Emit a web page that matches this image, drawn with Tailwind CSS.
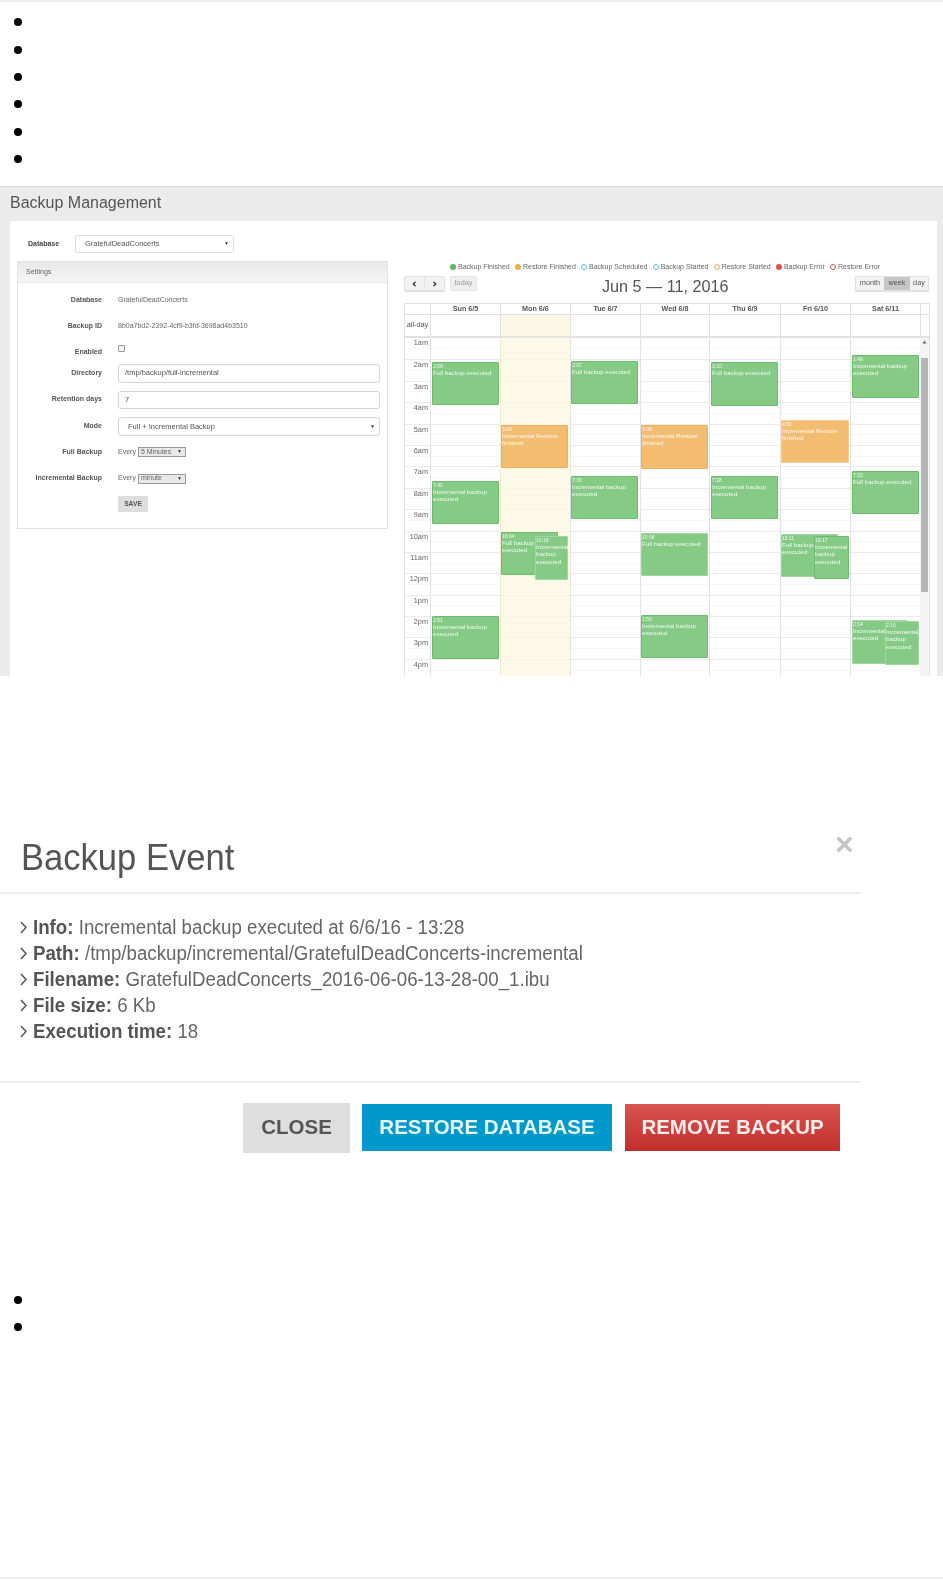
<!DOCTYPE html>
<html lang="en">
<head>
  <meta charset="utf-8" />
  <title>Backup Management</title>
  <script src="https://cdn.jsdelivr.net/npm/@tailwindcss/browser@4"></script>
</head>
<body class="bg-white font-['Liberation_Sans',Arial,sans-serif] text-[#555] h-[1580px] overflow-hidden">

  <div class="h-[2px] bg-[#eee]"></div>

  <!-- top empty list -->
  <ul class="pt-[6.5px] pl-[14px] h-[184px]">
    <li class="h-[27.4px] flex items-center"><span class="w-[8px] h-[8px] rounded-full bg-black"></span></li>
    <li class="h-[27.4px] flex items-center"><span class="w-[8px] h-[8px] rounded-full bg-black"></span></li>
    <li class="h-[27.4px] flex items-center"><span class="w-[8px] h-[8px] rounded-full bg-black"></span></li>
    <li class="h-[27.4px] flex items-center"><span class="w-[8px] h-[8px] rounded-full bg-black"></span></li>
    <li class="h-[27.4px] flex items-center"><span class="w-[8px] h-[8px] rounded-full bg-black"></span></li>
    <li class="h-[27.4px] flex items-center"><span class="w-[8px] h-[8px] rounded-full bg-black"></span></li>
  </ul>

  <!-- Backup Management screenshot -->
  <section class="h-[490px] border-t border-[#d8d8d8] bg-[#ebebeb] overflow-hidden blur-[0.3px]">
    <h1 class="h-[34px] pl-[10px] pt-[6px] text-[16px] leading-[20px] text-[#555]">Backup Management</h1>

    <div class="ml-[10px] mr-[6px] h-[460px] bg-white pl-[7px] flex">

      <!-- left column -->
      <div class="w-[371px] shrink-0">
        <div class="flex items-center h-[40px] pt-[6px]">
          <span class="w-[58px] pl-[11px] text-[7px] font-bold text-[#444]">Database</span>
          <div class="w-[159px] h-[18px] border border-[#ddd] rounded-[3px] flex items-center justify-between pl-[9px] pr-[4px] text-[7.5px] text-[#555]">
            <span>GratefulDeadConcerts</span>
            <span class="text-[5px] text-[#333]">▼</span>
          </div>
        </div>

        <div class="h-[268px] border border-[#e3e3e3] text-[7px]">
          <div class="h-[21px] bg-gradient-to-b from-[#e8e8e8] to-[#f5f5f5] border-b border-[#e8e8e8] pl-[8px] flex items-center text-[#666]">Settings</div>
          <div class="pt-[4px]">
            <div class="flex items-center h-[26px] gap-[16px]">
              <span class="w-[84px] text-right font-bold text-[#555]">Database</span>
              <span class="text-[#666]">GratefulDeadConcerts</span>
            </div>
            <div class="flex items-center h-[26px] gap-[16px]">
              <span class="w-[84px] text-right font-bold text-[#555]">Backup ID</span>
              <span class="text-[#666]">8b0a7bd2-2392-4cf9-b3fd-3698ad4b3510</span>
            </div>
            <div class="flex items-center h-[23px] gap-[16px]">
              <span class="w-[84px] text-right font-bold text-[#555] pt-[4px]">Enabled</span>
              <span class="w-[7px] h-[7px] border border-[#999] rounded-[1px] mb-[5px] bg-[#f4f4f4]"></span>
            </div>
            <div class="flex items-center h-[22px] gap-[16px]">
              <span class="w-[84px] text-right font-bold text-[#555]">Directory</span>
              <div class="w-[262px] h-[19px] border border-[#d4d4d4] rounded-[3px] flex items-center pl-[6px] text-[7.5px] text-[#555]">/tmp/backup/full-incremental</div>
            </div>
            <div class="flex items-center h-[31px] gap-[16px]">
              <span class="w-[84px] text-right font-bold text-[#555]">Retention days</span>
              <div class="w-[262px] h-[18px] border border-[#d4d4d4] rounded-[3px] flex items-center pl-[6px] text-[7.5px] text-[#555]">7</div>
            </div>
            <div class="flex items-center h-[23px] gap-[16px]">
              <span class="w-[84px] text-right font-bold text-[#555]">Mode</span>
              <div class="w-[262px] h-[19px] border border-[#d4d4d4] rounded-[3px] flex items-center justify-between pl-[9px] pr-[4px] text-[7.5px] text-[#555]">
                <span>Full + Incremental Backup</span>
                <span class="text-[5px] text-[#333]">▼</span>
              </div>
            </div>
            <div class="flex items-center h-[28px] gap-[16px]">
              <span class="w-[84px] text-right font-bold text-[#555]">Full Backup</span>
              <div class="flex items-center gap-[2px] text-[#666]">
                <span>Every</span>
                <div class="w-[48px] h-[10px] border border-[#999] bg-[#e8e8e8] flex items-center justify-between pl-[2px] pr-[3px] text-[7px]"><span>5 Minutes</span><span class="text-[5px] text-[#333]">▼</span></div>
              </div>
            </div>
            <div class="flex items-center h-[25px] gap-[16px]">
              <span class="w-[84px] text-right font-bold text-[#555]">Incremental Backup</span>
              <div class="flex items-center gap-[2px] text-[#666]">
                <span>Every</span>
                <div class="w-[48px] h-[10px] border border-[#999] bg-[#e8e8e8] flex items-center justify-between pl-[2px] pr-[3px] text-[7px]"><span>minute</span><span class="text-[5px] text-[#333]">▼</span></div>
              </div>
            </div>
            <div class="pl-[100px] pt-[5px]">
              <div class="w-[30px] h-[16px] bg-[#ddd] flex items-center justify-center font-bold text-[#555] text-[6.7px]">SAVE</div>
            </div>
          </div>
        </div>
      </div>

      <!-- calendar -->
      <div class="ml-[16px] w-[525px] shrink-0">
        <div class="h-[55px] relative">
          <div class="absolute top-[41px] left-[46px] flex items-center text-[7px] leading-[10px] text-[#666] whitespace-nowrap gap-[5.2px]">
            <span class="flex items-center gap-[2px]"><i class="w-[6px] h-[6px] rounded-full bg-[#5cb85c]"></i>Backup Finished</span>
            <span class="flex items-center gap-[2px]"><i class="w-[6px] h-[6px] rounded-full bg-[#f0ad4e]"></i>Restore Finished</span>
            <span class="flex items-center gap-[2px]"><i class="w-[6px] h-[6px] rounded-full border border-[#5bc0de]"></i>Backup Scheduled</span>
            <span class="flex items-center gap-[2px]"><i class="w-[6px] h-[6px] rounded-full border border-[#5bc0de]"></i>Backup Started</span>
            <span class="flex items-center gap-[2px]"><i class="w-[6px] h-[6px] rounded-full border border-[#f0ad4e]"></i>Restore Started</span>
            <span class="flex items-center gap-[2px]"><i class="w-[6px] h-[6px] rounded-full bg-[#d9534f]"></i>Backup Error</span>
            <span class="flex items-center gap-[2px]"><i class="w-[6px] h-[6px] rounded-full border border-[#d9534f]"></i>Restore Error</span>
          </div>
        </div>

        <!-- toolbar -->
        <div class="h-[27px] flex items-start relative">
          <div class="flex h-[15px] w-[41px] rounded-[2px] border border-[#e2e2e2] bg-[#f2f2f2] shadow-[0_1px_1px_#ddd]">
            <span class="w-[20px] flex items-center justify-center border-r border-[#e2e2e2]"><svg width="5" height="6" viewBox="0 0 5 6"><path d="M3.5 .8 1.3 3l2.2 2.2" fill="none" stroke="#333" stroke-width="1.3"/></svg></span>
            <span class="flex-1 flex items-center justify-center"><svg width="5" height="6" viewBox="0 0 5 6"><path d="M1.5 .8 3.7 3 1.5 5.2" fill="none" stroke="#333" stroke-width="1.3"/></svg></span>
          </div>
          <div class="ml-[5px] w-[27px] h-[15px] rounded-[2px] border border-[#e5e5e5] bg-[#efefef] flex items-center justify-center text-[7.3px] text-[#999]">today</div>
          <div class="absolute left-[198px] top-[1px] text-[16.2px] leading-[18px] text-[#555] whitespace-nowrap">Jun 5 — 11, 2016</div>
          <div class="ml-auto flex h-[15px] w-[74px] rounded-[2px] border border-[#e2e2e2] bg-[#f2f2f2] text-[7.3px] text-[#555] shadow-[0_1px_1px_#ddd]">
            <span class="w-[28px] flex items-center justify-center">month</span>
            <span class="w-[26px] flex items-center justify-center bg-[#c6c6c6]">week</span>
            <span class="flex-1 flex items-center justify-center">day</span>
          </div>
        </div>

        <!-- day header -->
        <div class="grid grid-cols-[25px_70px_70px_70px_69px_71px_70px_70px_10px] h-[11px] border-t border-[#e2e2e2] border-x text-[7.2px] font-bold text-[#555] text-center leading-[10px] -mr-px">
          <div></div>
          <div class="border-l border-[#e2e2e2]">Sun 6/5</div>
          <div class="border-l border-[#e2e2e2]">Mon 6/6</div>
          <div class="border-l border-[#e2e2e2]">Tue 6/7</div>
          <div class="border-l border-[#e2e2e2]">Wed 6/8</div>
          <div class="border-l border-[#e2e2e2]">Thu 6/9</div>
          <div class="border-l border-[#e2e2e2]">Fri 6/10</div>
          <div class="border-l border-[#e2e2e2]">Sat 6/11</div>
          <div class="border-l border-[#e2e2e2]"></div>
        </div>
        <!-- all-day -->
        <div class="grid grid-cols-[25px_70px_70px_70px_69px_71px_70px_70px_10px] h-[24px] border-t border-b-[2px] border-x border-[#e2e2e2] text-[7.3px] text-[#555] -mr-px">
          <div class="flex items-center justify-center">all-day</div>
          <div class="border-l border-[#e2e2e2]"></div>
          <div class="border-l border-[#e2e2e2] bg-[#fcf7e4]"></div>
          <div class="border-l border-[#e2e2e2]"></div>
          <div class="border-l border-[#e2e2e2]"></div>
          <div class="border-l border-[#e2e2e2]"></div>
          <div class="border-l border-[#e2e2e2]"></div>
          <div class="border-l border-[#e2e2e2]"></div>
          <div class="border-l border-[#e2e2e2]"></div>
        </div>

        <!-- time grid -->
        <div class="relative h-[340px] overflow-hidden border-x border-[#e2e2e2] text-[7.3px] text-[#666] -mr-px">
          <div class="h-[21.4px] w-[515px]"><div class="h-[10.7px] border-b border-dotted border-[#efefef]"><span class="block w-[23px] text-right leading-[9px]">1am</span></div></div>
          <div class="h-[21.4px] border-t border-[#ebebeb] w-[515px]"><div class="h-[10.7px] border-b border-dotted border-[#efefef]"><span class="block w-[23px] text-right leading-[9px]">2am</span></div></div>
          <div class="h-[21.4px] border-t border-[#ebebeb] w-[515px]"><div class="h-[10.7px] border-b border-dotted border-[#efefef]"><span class="block w-[23px] text-right leading-[9px]">3am</span></div></div>
          <div class="h-[21.4px] border-t border-[#ebebeb] w-[515px]"><div class="h-[10.7px] border-b border-dotted border-[#efefef]"><span class="block w-[23px] text-right leading-[9px]">4am</span></div></div>
          <div class="h-[21.4px] border-t border-[#ebebeb] w-[515px]"><div class="h-[10.7px] border-b border-dotted border-[#efefef]"><span class="block w-[23px] text-right leading-[9px]">5am</span></div></div>
          <div class="h-[21.4px] border-t border-[#ebebeb] w-[515px]"><div class="h-[10.7px] border-b border-dotted border-[#efefef]"><span class="block w-[23px] text-right leading-[9px]">6am</span></div></div>
          <div class="h-[21.4px] border-t border-[#ebebeb] w-[515px]"><div class="h-[10.7px] border-b border-dotted border-[#efefef]"><span class="block w-[23px] text-right leading-[9px]">7am</span></div></div>
          <div class="h-[21.4px] border-t border-[#ebebeb] w-[515px]"><div class="h-[10.7px] border-b border-dotted border-[#efefef]"><span class="block w-[23px] text-right leading-[9px]">8am</span></div></div>
          <div class="h-[21.4px] border-t border-[#ebebeb] w-[515px]"><div class="h-[10.7px] border-b border-dotted border-[#efefef]"><span class="block w-[23px] text-right leading-[9px]">9am</span></div></div>
          <div class="h-[21.4px] border-t border-[#ebebeb] w-[515px]"><div class="h-[10.7px] border-b border-dotted border-[#efefef]"><span class="block w-[23px] text-right leading-[9px]">10am</span></div></div>
          <div class="h-[21.4px] border-t border-[#ebebeb] w-[515px]"><div class="h-[10.7px] border-b border-dotted border-[#efefef]"><span class="block w-[23px] text-right leading-[9px]">11am</span></div></div>
          <div class="h-[21.4px] border-t border-[#ebebeb] w-[515px]"><div class="h-[10.7px] border-b border-dotted border-[#efefef]"><span class="block w-[23px] text-right leading-[9px]">12pm</span></div></div>
          <div class="h-[21.4px] border-t border-[#ebebeb] w-[515px]"><div class="h-[10.7px] border-b border-dotted border-[#efefef]"><span class="block w-[23px] text-right leading-[9px]">1pm</span></div></div>
          <div class="h-[21.4px] border-t border-[#ebebeb] w-[515px]"><div class="h-[10.7px] border-b border-dotted border-[#efefef]"><span class="block w-[23px] text-right leading-[9px]">2pm</span></div></div>
          <div class="h-[21.4px] border-t border-[#ebebeb] w-[515px]"><div class="h-[10.7px] border-b border-dotted border-[#efefef]"><span class="block w-[23px] text-right leading-[9px]">3pm</span></div></div>
          <div class="h-[21.4px] border-t border-[#ebebeb] w-[515px]"><div class="h-[10.7px] border-b border-dotted border-[#efefef]"><span class="block w-[23px] text-right leading-[9px]">4pm</span></div></div>

          <!-- day columns lie over the hour rows -->
          <div class="absolute inset-x-0 bottom-0 -top-px grid grid-cols-[25px_70px_70px_70px_69px_71px_70px_70px_10px] text-[6.2px] leading-[7.4px] text-white/90">
            <div></div>
            <div class="relative border-l border-[#e2e2e2]">
              <div class="absolute left-[1px] w-[67px] top-[25px] h-[43px] bg-[#85ca85] border border-[#6cbc6c] rounded-[1px]"><p class="text-[5px] leading-[6px]">2:09</p><p>Full backup executed</p></div>
              <div class="absolute left-[1px] w-[67px] top-[144px] h-[43px] bg-[#85ca85] border border-[#6cbc6c] rounded-[1px]"><p class="text-[5px] leading-[6px]">7:40</p><p>Incremental backup executed</p></div>
              <div class="absolute left-[1px] w-[67px] top-[279px] h-[43px] bg-[#85ca85] border border-[#6cbc6c] rounded-[1px]"><p class="text-[5px] leading-[6px]">2:01</p><p>Incremental backup executed</p></div>
            </div>
            <div class="relative border-l border-[#f0ead2] bg-[#fcf7e4]/80">
              <div class="absolute left-[0px] w-[67px] top-[88px] h-[43px] bg-[#f3bd71] border border-[#eeb15a] rounded-[1px]"><p class="text-[5px] leading-[6px]">5:06</p><p>Incremental Restore finished</p></div>
              <div class="absolute left-[0px] w-[57px] top-[195px] h-[43px] bg-[#85ca85] border border-[#6cbc6c] rounded-[1px]"><p class="text-[5px] leading-[6px]">10:04</p><p>Full backup<br>executed</p></div>
              <div class="absolute left-[34px] w-[33px] top-[199px] h-[44px] bg-[#85ca85] border border-[#9fd79f] rounded-[1px]"><p class="text-[5px] leading-[6px]">10:18</p><p>Incremental backup executed</p></div>
            </div>
            <div class="relative border-l border-[#e2e2e2]">
              <div class="absolute left-[0px] w-[67px] top-[24px] h-[43px] bg-[#85ca85] border border-[#6cbc6c] rounded-[1px]"><p class="text-[5px] leading-[6px]">2:07</p><p>Full backup executed</p></div>
              <div class="absolute left-[0px] w-[67px] top-[139px] h-[43px] bg-[#85ca85] border border-[#6cbc6c] rounded-[1px]"><p class="text-[5px] leading-[6px]">7:30</p><p>Incremental backup executed</p></div>
            </div>
            <div class="relative border-l border-[#e2e2e2]">
              <div class="absolute left-[0px] w-[67px] top-[88px] h-[44px] bg-[#f3bd71] border border-[#eeb15a] rounded-[1px]"><p class="text-[5px] leading-[6px]">5:08</p><p>Incremental Restore finished</p></div>
              <div class="absolute left-[0px] w-[67px] top-[196px] h-[43px] bg-[#85ca85] border border-[#9fd79f] rounded-[1px]"><p class="text-[5px] leading-[6px]">10:08</p><p>Full backup executed</p></div>
              <div class="absolute left-[0px] w-[67px] top-[278px] h-[43px] bg-[#85ca85] border border-[#6cbc6c] rounded-[1px]"><p class="text-[5px] leading-[6px]">1:59</p><p>Incremental backup executed</p></div>
            </div>
            <div class="relative border-l border-[#e2e2e2]">
              <div class="absolute left-[1px] w-[67px] top-[25px] h-[44px] bg-[#85ca85] border border-[#6cbc6c] rounded-[1px]"><p class="text-[5px] leading-[6px]">2:10</p><p>Full backup executed</p></div>
              <div class="absolute left-[1px] w-[67px] top-[139px] h-[43px] bg-[#85ca85] border border-[#6cbc6c] rounded-[1px]"><p class="text-[5px] leading-[6px]">7:28</p><p>Incremental backup executed</p></div>
            </div>
            <div class="relative border-l border-[#e2e2e2]">
              <div class="absolute left-[0px] w-[68px] top-[83px] h-[43px] bg-[#f3bd71] border border-[#f6cd93] rounded-[1px]"><p class="text-[5px] leading-[6px]">4:50</p><p>Incremental Restore finished</p></div>
              <div class="absolute left-[0px] w-[57px] top-[197px] h-[43px] bg-[#85ca85] border border-[#9fd79f] rounded-[1px]"><p class="text-[5px] leading-[6px]">10:11</p><p>Full backup<br>executed</p></div>
              <div class="absolute left-[33px] w-[35px] top-[199px] h-[43px] bg-[#85ca85] border border-[#6cbc6c] rounded-[1px]"><p class="text-[5px] leading-[6px]">10:17</p><p>Incremental backup executed</p></div>
            </div>
            <div class="relative border-l border-[#e2e2e2]">
              <div class="absolute left-[1px] w-[67px] top-[18px] h-[43px] bg-[#85ca85] border border-[#6cbc6c] rounded-[1px]"><p class="text-[5px] leading-[6px]">1:49</p><p>Incremental backup executed</p></div>
              <div class="absolute left-[1px] w-[67px] top-[134px] h-[43px] bg-[#85ca85] border border-[#6cbc6c] rounded-[1px]"><p class="text-[5px] leading-[6px]">7:15</p><p>Full backup executed</p></div>
              <div class="absolute left-[1px] w-[56px] top-[283px] h-[44px] bg-[#85ca85] border border-[#9fd79f] rounded-[1px]"><p class="text-[5px] leading-[6px]">2:14</p><p>Incremental<br>executed</p></div>
              <div class="absolute left-[34px] w-[34px] top-[284px] h-[44px] bg-[#85ca85] border border-[#9fd79f] rounded-[1px]"><p class="text-[5px] leading-[6px]">2:16</p><p>Incremental backup executed</p></div>
            </div>
            <!-- scrollbar -->
            <div class="relative bg-[#f4f4f4]">
              <svg class="absolute left-[2px] top-[3px]" width="5" height="4" viewBox="0 0 5 4"><path d="M2.5 .5 4.5 3.5H.5z" fill="#666"/></svg>
              <div class="absolute left-[1px] w-[7px] top-[21px] h-[234px] bg-[#b6b6b6]"></div>
            </div>
          </div>
        </div>
      </div>
    </div>
  </section>

  <!-- Backup Event modal screenshot -->
  <section class="blur-[0.5px]">
    <div class="h-[216px] relative">
      <h2 class="absolute left-[21px] top-[158px] text-[36px] leading-[48px] text-[#555] origin-left scale-x-[0.96]">Backup Event</h2>
      <span class="absolute left-[835px] top-[150px] text-[32px] leading-[36px] font-bold text-[#c4c4c4]">×</span>
    </div>
    <div class="w-[861px] h-[2px] bg-[#eee]"></div>
    <div class="h-[187px] pt-[20px] pl-[20px] text-[20px] leading-[26px] text-[#666]">
      <p class="flex items-center gap-[6px]"><svg width="7" height="13" viewBox="0 0 7 13"><path d="M1 1l5 5.5L1 12" fill="none" stroke="#555" stroke-width="1.5"/></svg><span class="origin-left scale-x-[0.935]"><b class="text-[#555]">Info:</b> Incremental backup executed at 6/6/16 - 13:28</span></p>
      <p class="flex items-center gap-[6px]"><svg width="7" height="13" viewBox="0 0 7 13"><path d="M1 1l5 5.5L1 12" fill="none" stroke="#555" stroke-width="1.5"/></svg><span class="origin-left scale-x-[0.935]"><b class="text-[#555]">Path:</b> /tmp/backup/incremental/GratefulDeadConcerts-incremental</span></p>
      <p class="flex items-center gap-[6px]"><svg width="7" height="13" viewBox="0 0 7 13"><path d="M1 1l5 5.5L1 12" fill="none" stroke="#555" stroke-width="1.5"/></svg><span class="origin-left scale-x-[0.935]"><b class="text-[#555]">Filename:</b> GratefulDeadConcerts_2016-06-06-13-28-00_1.ibu</span></p>
      <p class="flex items-center gap-[6px]"><svg width="7" height="13" viewBox="0 0 7 13"><path d="M1 1l5 5.5L1 12" fill="none" stroke="#555" stroke-width="1.5"/></svg><span class="origin-left scale-x-[0.935]"><b class="text-[#555]">File size:</b> 6 Kb</span></p>
      <p class="flex items-center gap-[6px]"><svg width="7" height="13" viewBox="0 0 7 13"><path d="M1 1l5 5.5L1 12" fill="none" stroke="#555" stroke-width="1.5"/></svg><span class="origin-left scale-x-[0.935]"><b class="text-[#555]">Execution time:</b> 18</span></p>
    </div>
    <div class="w-[861px] h-[2px] bg-[#eee]"></div>
    <div class="flex items-center h-[76px] pl-[243px] text-[20.5px] font-bold pt-[13px]">
      <div class="w-[107px] h-[50px] bg-[#dedede] text-[#555] flex items-center justify-center">CLOSE</div>
      <div class="ml-[12px] w-[250px] h-[47px] bg-[#0199cb] text-[#e6f7fd] flex items-center justify-center">RESTORE DATABASE</div>
      <div class="ml-[13px] w-[215px] h-[47px] bg-gradient-to-b from-[#d9534f] to-[#c12e2a] text-[#fdeeee] flex items-center justify-center">REMOVE BACKUP</div>
    </div>
  </section>

  <!-- bottom empty list -->
  <ul class="mt-[127px] pl-[14px]">
    <li class="h-[27.4px] flex items-center"><span class="w-[8px] h-[8px] rounded-full bg-black"></span></li>
    <li class="h-[27.4px] flex items-center"><span class="w-[8px] h-[8px] rounded-full bg-black"></span></li>
  </ul>
  <div class="mt-[236px] h-[2px] bg-[#eee]"></div>
</body>
</html>
